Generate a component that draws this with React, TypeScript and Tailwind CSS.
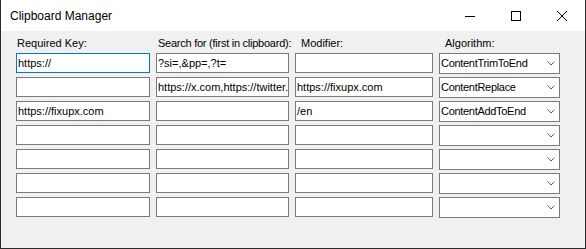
import React from "react";

const rows: { key: string; search: string; mod: string; algo: string; focus?: boolean }[] = [
  { key: "https://", search: "?si=,&pp=,?t=", mod: "", algo: "ContentTrimToEnd", focus: true },
  { key: "", search: "https://x.com,https://twitter.com", mod: "https://fixupx.com", algo: "ContentReplace" },
  { key: "https://fixupx.com", search: "", mod: "/en", algo: "ContentAddToEnd" },
  { key: "", search: "", mod: "", algo: "" },
  { key: "", search: "", mod: "", algo: "" },
  { key: "", search: "", mod: "", algo: "" },
  { key: "", search: "", mod: "", algo: "" },
];

function Box({ text, focus }: { text: string; focus?: boolean }) {
  return (
    <div
      className={
        "h-[20px] border bg-white pl-[1px] flex items-center overflow-hidden whitespace-nowrap leading-[13px] " +
        (focus ? "border-[#0078d7]" : "border-[#7a7a7a]")
      }
    >
      {text}
    </div>
  );
}

function Combo({ text }: { text: string }) {
  return (
    <div className="h-[21px] border border-[#7a7a7a] bg-white pl-[1px] flex items-center justify-between overflow-hidden whitespace-nowrap leading-[13px]">
      <span className="tracking-[-0.3px]">{text}</span>
      <svg width="8" height="5" viewBox="0 0 8 5" className="mr-[4px] shrink-0">
        <path d="M0.5 0.5 L4 4 L7.5 0.5" fill="none" stroke="#606060" strokeWidth="1" />
      </svg>
    </div>
  );
}

export default function App() {
  return (
    <div className="w-[586px] h-[249px] bg-[#f0f0f0] border-x border-b border-[#2b2b2b] flex flex-col font-['Liberation_Sans',Arial,sans-serif] text-[11px] text-black">
      <div className="h-[31px] bg-white flex items-center shrink-0">
        <div className="pl-[9px] text-[12px] flex-1">Clipboard Manager</div>
        <div className="flex h-full">
          <div className="w-[46px] h-full flex items-center justify-center">
            <svg width="10" height="10" viewBox="0 0 10 10">
              <path d="M0 5.5 H10" stroke="#000" strokeWidth="1" />
            </svg>
          </div>
          <div className="w-[46px] h-full flex items-center justify-center">
            <svg width="10" height="10" viewBox="0 0 10 10">
              <rect x="0.5" y="0.5" width="9" height="9" fill="none" stroke="#000" strokeWidth="1" />
            </svg>
          </div>
          <div className="w-[46px] h-full flex items-center justify-center">
            <svg width="10" height="10" viewBox="0 0 10 10">
              <path d="M0 0 L10 10 M10 0 L0 10" stroke="#000" strokeWidth="1" />
            </svg>
          </div>
        </div>
      </div>
      <div className="pl-[15px] pt-[6px]">
        <div className="grid grid-cols-[134px_133px_138px_121px] gap-x-[6px] h-[13px] leading-[13px] mb-[3px] whitespace-nowrap">
          <div className="pl-[1px]">Required Key:</div>
          <div className="pl-[2px] tracking-[-0.25px]">Search for (first in clipboard):</div>
          <div className="pl-[6px]">Modifier:</div>
          <div className="pl-[6px]">Algorithm:</div>
        </div>
        <div className="flex flex-col gap-[4px]">
          {rows.map((r, i) => (
            <div key={i} className="grid grid-cols-[134px_133px_138px_121px] gap-x-[6px] h-[20px] items-start">
              <Box text={r.key} focus={r.focus} />
              <Box text={r.search} />
              <Box text={r.mod} />
              <Combo text={r.algo} />
            </div>
          ))}
        </div>
      </div>
    </div>
  );
}
